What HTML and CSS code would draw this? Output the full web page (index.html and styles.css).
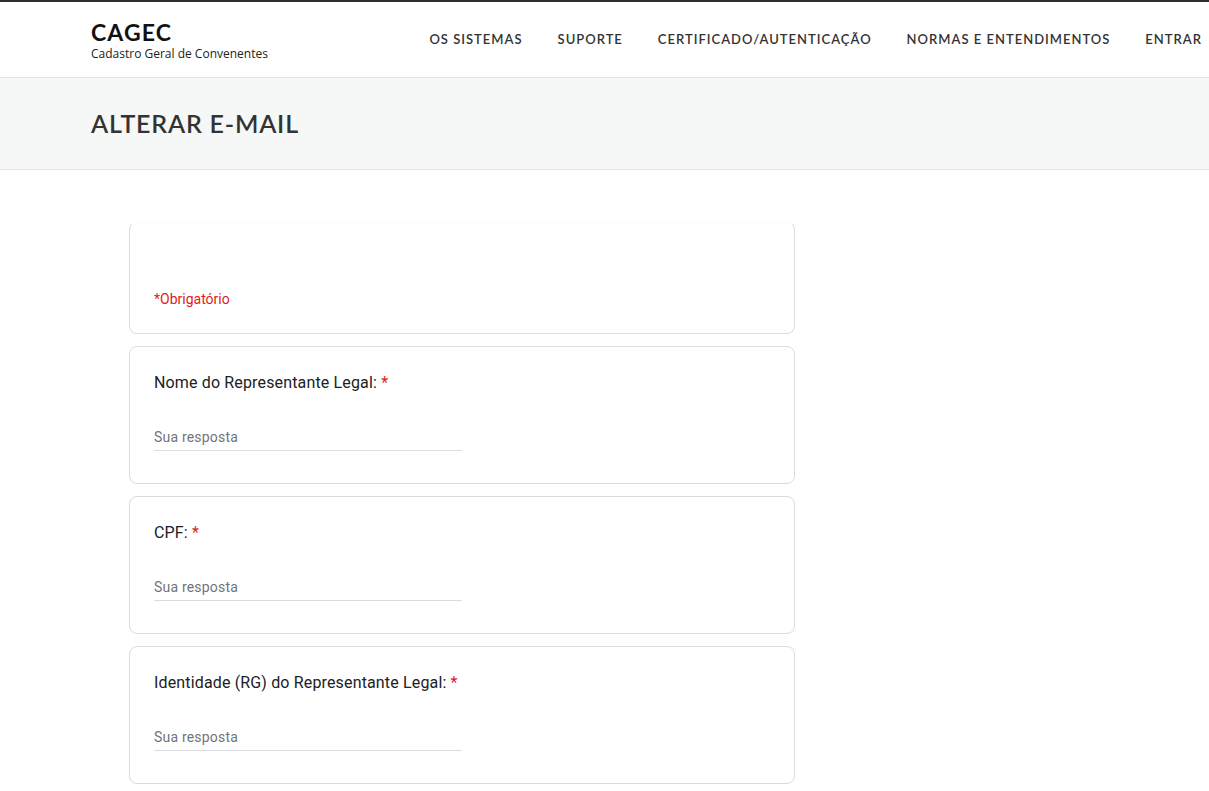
FILE: index.html
```html
<!DOCTYPE html>
<html lang="pt-BR">
<head>
<meta charset="utf-8">
<title>CAGEC - Alterar E-mail</title>
<link rel="stylesheet" href="styles.css">
</head>
<body>
<header class="site-header">
  <div class="brand">
    <div class="brand-name">CAGEC</div>
    <div class="brand-sub">Cadastro Geral de Convenentes</div>
  </div>
  <nav class="nav">
    <a href="#">OS SISTEMAS</a>
    <a href="#">SUPORTE</a>
    <a href="#">CERTIFICADO/AUTENTICAÇÃO</a>
    <a href="#">NORMAS E ENTENDIMENTOS</a>
    <a href="#">ENTRAR</a>
  </nav>
</header>
<section class="page-title">
  <h1>ALTERAR E-MAIL</h1>
</section>
<main class="form">
  <div class="card card-head">
    <div class="required-note">*Obrigatório</div>
  </div>
  <div class="card">
    <div class="q-label">Nome do Representante Legal: <span class="ast">*</span></div>
    <input class="q-input" type="text" placeholder="Sua resposta">
  </div>
  <div class="card">
    <div class="q-label">CPF: <span class="ast">*</span></div>
    <input class="q-input" type="text" placeholder="Sua resposta">
  </div>
  <div class="card">
    <div class="q-label">Identidade (RG) do Representante Legal: <span class="ast">*</span></div>
    <input class="q-input" type="text" placeholder="Sua resposta">
  </div>
</main>
</body>
</html>
```
FILE: styles.css
```css
* { box-sizing: border-box; }
html, body { margin: 0; padding: 0; background: #fff; }
body { font-family: "Open Sans", "Liberation Sans", sans-serif; color: #333; }

.site-header {
  border-top: 2px solid #2f2f2f;
  border-bottom: 1px solid #e2e2e2;
  height: 78px;
  display: flex;
  align-items: center;
  justify-content: space-between;
  padding: 0 7px 0 91px;
}
.brand { display: flex; flex-direction: column; margin-top: 0; }
.brand-name {
  font-family: "Lato", sans-serif;
  font-weight: 700;
  font-size: 23px;
  line-height: 26px;
  color: #111;
  letter-spacing: 1.1px;
}
.brand-sub {
  font-family: "Open Sans", sans-serif;
  font-size: 12px;
  line-height: 15px;
  margin-top: 1px;
  color: #222;
}
.nav { display: flex; gap: 35px; margin-top: -1px; }
.nav a {
  font-family: "Lato", sans-serif;
  font-weight: 600;
  font-size: 13px;
  letter-spacing: 1px;
  color: #333;
  text-decoration: none;
}

.page-title {
  background: #f6f7f7;
  border-bottom: 1px solid #e4e5e5;
  height: 92px;
  display: flex;
  align-items: center;
  padding-left: 91px;
}
.page-title h1 {
  margin: 0;
  font-family: "Lato", sans-serif;
  font-weight: 600;
  font-size: 25px;
  letter-spacing: 0.8px;
  color: #333;
  padding-bottom: 2px;
}

.form {
  width: 666px;
  margin: 52px 0 0 129px;
  display: flex;
  flex-direction: column;
  gap: 12px;
}
.card {
  border: 1px solid #dadce0;
  border-radius: 8px;
  padding: 24px 24px 32px;
  background: #fff;
  font-family: Roboto, "Noto Sans", sans-serif;
}
.card-head {
  border-top-color: #fbfbfb;
  padding: 66px 24px 24px;
}
.required-note {
  color: #e01b1b;
  font-size: 14px;
  line-height: 20px;
}
.q-label {
  font-size: 16px;
  line-height: 24px;
  color: #202124;
  letter-spacing: 0.15px;
}
.ast { color: #e01b1b; }
.q-input {
  display: block;
  margin-top: 32px;
  width: 308px;
  border: none;
  border-bottom: 1px solid #dadce0;
  padding: 0 0 3px;
  height: 24px;
  font-family: Roboto, sans-serif;
  font-size: 14px;
  line-height: 20px;
  color: #202124;
  outline: none;
  background: transparent;
}
.q-input::placeholder { color: #70757a; letter-spacing: 0.2px; }
```
